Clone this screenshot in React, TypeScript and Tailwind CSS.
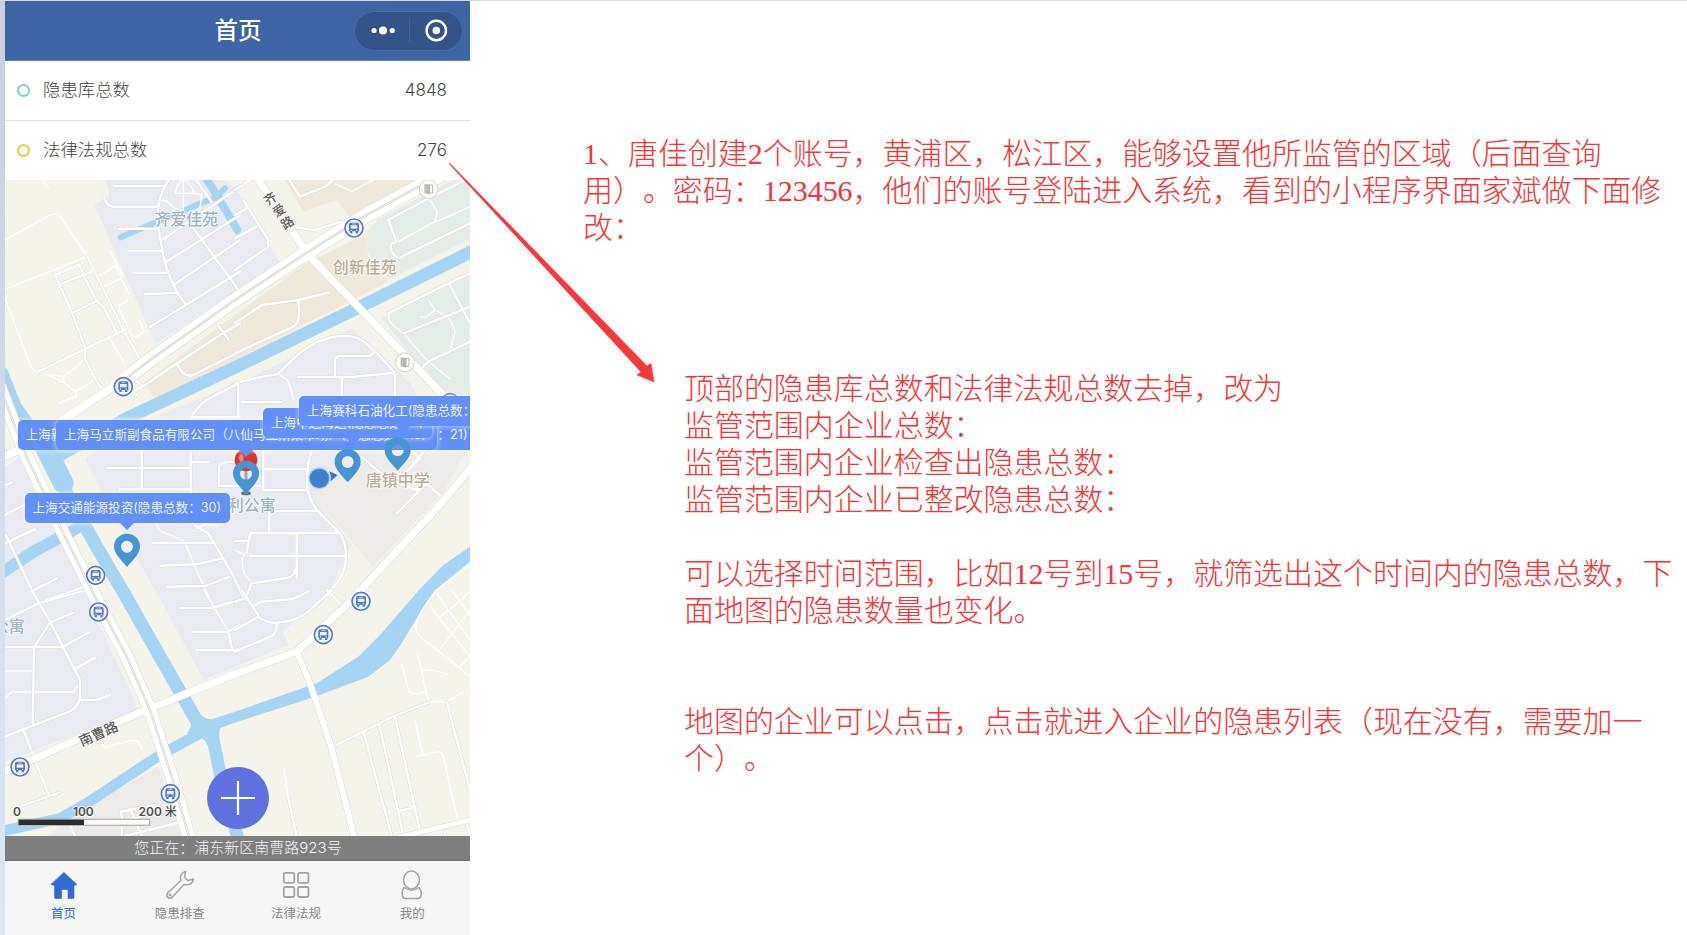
import React from 'react';

type Tile = { x: number; y: number; lanes: string; paths: string };

const zones = [
  { fill: '#e8ebf1', d: 'M315 540L330 585L283 615L467 1032L838 785L705 560L665 540Z' },
  { fill: '#efe9db', d: 'M855 540L910 635L1010 600L1050 655L1325 540Z' },
  { fill: '#efe9db', d: 'M430 1150L705 945L920 790L1095 705L1105 770L1165 845L705 1080L470 1200Z' },
  { fill: '#e4ede8', d: 'M1095 700L1105 760L1170 838L1410 715V540H1360L1140 655Z' },
  { fill: '#e4ede8', d: 'M1145 955L1410 820V1240L1370 1220L1270 1110Z' },
  { fill: '#e8ebf1', d: 'M1055 985L705 1155L400 1275L255 1375L380 1620L465 1770L612 2040L705 2000L865 1935L850 1895L990 1770L1045 1655L1055 1635L940 1490L1015 1400L1300 1340L1240 1160L1150 1070Z' },
  { fill: '#edece8', d: 'M940 1490L1045 1375L1410 1330L1335 1470L1120 1700Z' },
  { fill: '#e8ebf1', d: 'M15 1400L60 1375L265 1800L415 2130L15 2285Z' },
  { fill: '#ecebe7', d: 'M475 2300L220 2440L150 2508H545Z' },
];

const rivers = [
  { w: 38, d: 'M1420 752L1040 940L705 1102L380 1255L170 1370' },
  { w: 40, d: 'M5 1120L45 1220L150 1370L200 1480L290 1640L375 1785L480 1970L600 2180' },
  { w: 62, d: 'M130 1330L190 1450' },
  { w: 36, d: 'M0 1722L100 1655L230 1585' },
  { w: 32, d: 'M610 2195L480 2265L260 2410L180 2455L0 2495' },
  { w: 38, d: 'M632 2180L662 2330L715 2520' },
  { w: 18, d: 'M362 712L520 645L650 590L675 565' },
  { w: 24, d: 'M615 530L650 585L712 690' },
];

const trunk = [
  { w: 42, d: 'M340 1165L450 1080L705 900L925 755L1100 645L1320 525', mid: true },
  { w: 24, d: 'M340 1160L180 1265L60 1350L0 1372', mid: false },
  { w: 22, d: 'M765 525L925 765L1325 1180L1380 1240', mid: false },
  { w: 38, d: 'M-5 1150L80 1370L185 1590L285 1790L380 1970L450 2130L515 2330L570 2520', mid: true },
  { w: 22, d: 'M0 2322L250 2210L450 2125L705 2022L890 1955L1045 1810L1105 1745L1310 1525L1420 1395', mid: false },
  { w: 18, d: 'M890 1955L930 2050L995 2245L1065 2520', mid: false },
  { w: 14, d: 'M1195 2512L1420 2458', mid: false },
];

const tiles: Tile[] = [
  {
    x: 0,
    y: 525,
    paths:
      'M343 33H485M312 65Q318 92 340 95H475M357 161H470M388 227H482M402 293H497M435 358L528 353M510 10Q470 60 473 140Q485 230 500 280Q525 350 555 385M450 456L720 290M520 330L720 195M497 262L720 120M487 195L640 90L720 35M585 10L635 80M580 160L720 350M262 245L370 465L425 560M165 300L238 268L250 300L290 378L310 395L350 472M165 300L215 410L255 515V550Q275 600 312 650M180 328L280 288M220 412L290 378M110 592L255 522L380 462M400 610L430 635M430 632L660 480L720 445M655 452L685 492M530 565Q550 610 580 600L720 530M640 660L720 620',
    lanes:
      'M15 195L150 120L172 116L185 130L262 245M15 343L262 245M15 370L75 530Q90 580 110 592M330 228L370 305M295 305L345 272L388 358M310 335L360 312M383 377L358 390V405L395 480Q405 495 432 468L417 435M330 490L370 560M145 598L190 605L230 575L255 550M145 600L195 625L225 650L285 615M195 625L190 610M130 15L145 40M525 55Q535 15 550 15Q575 25 582 55ZM550 15V105M475 75L500 78Q530 110 550 105M582 55L605 60L600 100',
  },
  {
    x: 705,
    y: 525,
    paths:
      'M0 285L100 215V195L25 75M0 190L65 155M0 120L35 100M160 10L195 65L270 35L300 10M0 45L55 10M180 157L237 165L320 140M460 135L580 70L700 10M460 135L485 200M705 145L490 250Q460 230 470 205L485 200M0 445L80 390L190 375L280 353M188 375Q195 400 190 430Q187 450 170 457L0 535M460 415L640 325L705 295M505 475L705 395M645 330L705 445M560 580L580 560L705 500M0 625L60 610L130 597Q200 520 250 500Q320 470 370 490Q410 510 480 595V675M190 606L350 606L480 593M300 606V555Q300 545 315 543H405L415 535M320 606V675M10 625V700M0 330L20 360',
    lanes:
      'M300 25L350 50L415 15M585 75L607 110L600 140L490 200M605 140L705 95M460 415Q460 440 475 450L510 480L575 555L645 612M583 378L600 405L570 428L557 426M600 405L640 425L660 465Q655 500 645 525M130 597L158 615L175 660',
  },
  {
    x: 0,
    y: 1140,
    paths:
      'M575 115Q580 90 620 60L715 10V115M575 112H720M425 200V328M325 264H572M572 112V420L590 440L625 460L670 535L735 650M575 247H625M360 328H570M657 318V260Q660 245 700 245M657 318H790M590 445L610 436H655M460 488H640M480 557L590 553L670 535M503 620L620 617L690 590M15 405L100 360M15 490L105 447M18 465L100 640M100 632L170 595M15 315L35 308M380 15L410 45M390 40L460 0',
    lanes:
      'M470 425Q470 455 500 460L555 485L580 550L630 660M140 660L255 620M180 70Q190 60 230 50L225 30',
  },
  {
    x: 705,
    y: 1140,
    paths:
      'M20 66H138M85 268H215M85 190V330H215M235 200Q210 260 218 330Q225 360 245 390L315 460Q340 500 330 560Q320 600 285 632L240 680M105 393H245M103 393V455M0 483H40L47 460L315 458M45 527H330M185 460V595M45 460L35 520M50 610L150 595Q180 590 180 570M50 608L30 660M0 600L30 660M380 230L420 265L455 295L545 330L590 280M525 205L555 235L500 290M485 400L575 310L630 360M535 250L600 180',
    lanes: 'M35 520Q15 530 25 570Q30 590 50 607M160 5L175 60M45 527L20 520L0 510',
  },
  {
    x: 0,
    y: 1770,
    paths:
      'M95 0L150 95L240 270V325Q235 345 215 362L15 440M15 90L115 40M150 98L220 68M103 170L150 98M185 172L265 128M15 171H185M222 238L285 203M102 171L98 400M240 330H290L330 315M70 420L145 612M35 658L180 607M540 54H635L720 30M580 125H685L720 105M588 181H705L720 175M685 125L697 180M365 738V680L362 665L465 645M365 695L440 675M390 655L425 738M375 738L545 695M210 705L225 738',
    lanes:
      'M115 40L260 0M15 243H100M15 325L35 306H220L240 280M300 450L315 472L400 450L415 455L425 475M612 0L685 125',
  },
  {
    x: 705,
    y: 1770,
    paths:
      'M0 120L70 80Q100 100 125 98Q180 95 220 65L290 0M0 185L110 138Q125 130 125 100M20 0L70 75M0 35L30 25M55 50L75 35L170 28L220 5M275 0L325 50M290 472L480 377L580 338M387 430L470 738M433 402L505 738M480 380L555 725M635 335L705 600M495 662L540 652M160 625L185 738M630 725V738M695 700L705 738',
    lanes:
      'M580 335H635L690 303M147 540L160 625M548 190L580 335M500 220L520 300Q530 318 570 307M560 240L600 242L637 253M540 393L563 493M543 500L610 485Q620 485 625 500L670 700M605 0Q550 70 543 100V120L555 140L705 258M585 50L705 200M610 85L680 30L705 5M610 185L705 60M605 10L705 150M675 230L705 200M650 0L705 75M600 5L705 -75',
  },
];

const stops = [
  [370, 1160], [1062, 684], [1350, 1208], [287, 1726], [296, 1836],
  [60, 2301], [511, 2381], [1083, 1804], [970, 1904],
];

function BusStop({ x, y }: { x: number; y: number }) {
  return (
    <g transform={`translate(${x} ${y})`}>
      <circle r="31" fill="#fff" opacity=".8" />
      <circle r="27" fill="#eef2fb" stroke="#5478cb" strokeWidth="5" />
      <path d="M-9 -16H9Q15 -16 15 -9V10H-15V-9Q-15 -16 -9 -16ZM-12 10H-5V16H-12ZM5 10H12V16H5Z" fill="#5478cb" />
      <path d="M-10 -8H10V2H-10Z" fill="#eef2fb" />
      <path d="M-6 -12H6" stroke="#eef2fb" strokeWidth="2" />
      <circle cx="-8" cy="7" r="2" fill="#fff" />
      <circle cx="8" cy="7" r="2" fill="#fff" />
    </g>
  );
}

function Gate({ x, y }: { x: number; y: number }) {
  return (
    <g transform={`translate(${x} ${y})`}>
      <circle r="28" fill="#fefefc" stroke="#d2d1cc" strokeWidth="3" />
      <path d="M-13 -14H3V16L-13 12Z" fill="#b9b6ae" />
      <path d="M3 -12H12V12H3Z" fill="none" stroke="#b9b6ae" strokeWidth="3" />
      <path d="M-8 -9V9" stroke="#d9d6cf" strokeWidth="2" />
    </g>
  );
}

function BaseMap() {
  return (
    <svg className="block h-[656px] w-[465px]" viewBox="15 540 1395 1968" fill="none">
      <rect x="15" y="540" width="1395" height="1968" fill="#f4f4ea" />
      {zones.map((z) => (
        <path key={z.d} d={z.d} fill={z.fill} />
      ))}
      <g stroke="#a6d4f5" strokeLinejoin="round" strokeLinecap="round">
        {rivers.map((r) => (
          <path key={r.d} d={r.d} strokeWidth={r.w} />
        ))}
      </g>
      <path
        fill="#a6d4f5"
        d="M1410 1640L1330 1695L1257 1770L1145 1900L1075 1970L950 2050L705 2135L635 2158Q610 2158 590 2130L540 2080L575 2160Q575 2185 560 2200L600 2212Q620 2220 628 2250L660 2300Q652 2200 662 2183L705 2168L945 2090L1105 2030L1170 1980L1205 1930L1225 1895L1305 1770L1410 1685Z"
      />
      {tiles.map((t) => (
        <g key={`${t.x}-${t.y}`} transform={`translate(${t.x} ${t.y})`} strokeLinejoin="round" strokeLinecap="round">
          <path d={t.lanes} stroke="#fff" strokeWidth="4" />
          <path d={t.paths} stroke="#d6d6d5" strokeWidth="10" />
          <path d={t.paths} stroke="#fff" strokeWidth="7.500" />
        </g>
      ))}
      <g strokeLinejoin="round">
        {trunk.map((t) => (
          <path key={t.d} d={t.d} stroke="#d8d8d3" strokeWidth={t.w + 3} />
        ))}
        {trunk.map((t) => (
          <path key={t.d} d={t.d} stroke="#fff" strokeWidth={t.w} />
        ))}
        {trunk.filter((t) => t.mid).map((t) => (
          <g key={t.d}>
            <path d={t.d} stroke="#d4d4d0" strokeWidth="7" />
            <path d={t.d} stroke="#f4f4ee" strokeWidth="3" />
          </g>
        ))}
      </g>
      {stops.map(([x, y]) => (
        <BusStop key={`${x}-${y}`} x={x} y={y} />
      ))}
      <Gate x={1286} y={567} />
      <Gate x={1215} y={1087} />
      <g
        fontFamily="'Noto Sans CJK SC', sans-serif"
        stroke="#fff"
        strokeOpacity=".85"
        strokeWidth="5"
        paintOrder="stroke"
        strokeLinejoin="round"
        fontSize="48"
        fontWeight="500"
      >
        <text x="463" y="676" fill="#9cb3c2">齐爱佳苑</text>
        <text x="998" y="820" fill="#b9ac93">创新佳苑</text>
        <text x="1097" y="1457" fill="#b9ac93">唐镇中学</text>
        <text x="683" y="1532" fill="#9cb3c2">利公寓</text>
        <text x="-22" y="1895" fill="#9cb3c2">公寓</text>
        <g fill="#5a5a5a" fontSize="38" textAnchor="middle">
          <text transform="translate(811 596) rotate(-33)" y="14">齐</text>
          <text transform="translate(837 631) rotate(-33)" y="14">爱</text>
          <text transform="translate(862 668) rotate(-33)" y="14">路</text>
          <text transform="translate(296 2202) rotate(-24)" y="14" fontSize="41">南曹路</text>
        </g>
        <g fill="#4c4c4c" fontSize="36" fontFamily="Inter, 'Noto Sans CJK SC', sans-serif" textAnchor="middle">
          <text x="51" y="2447" fontWeight="600">0</text>
          <text x="250" y="2447" fontWeight="600">100</text>
          <text x="473" y="2447" fontWeight="600">200 <tspan fontWeight="500">米</tspan></text>
        </g>
      </g>
      <rect x="55" y="2458" width="394" height="18" fill="#fbfbf9" stroke="#b5b5b3" strokeWidth="4" />
      <rect x="56" y="2459" width="196" height="16" fill="#2b2d2e" />
      <g transform="translate(738 1380)">
        <ellipse cx="0" cy="100" rx="15" ry="6" fill="#6b6f73" />
        <path d="M0 20V100" stroke="#a2a5a8" strokeWidth="9" />
        <circle cx="0" cy="0" r="34" fill="#dd3428" />
        <ellipse cx="-14" cy="-6" rx="7" ry="11" fill="#f0857c" />
      </g>
      <circle cx="958" cy="1435" r="33" fill="#a9c8ef" opacity=".8" />
      <circle cx="958" cy="1435" r="29" fill="#3f7fd1" />
      <path d="M988 1414L1013 1425L992 1444Q995 1428 988 1414Z" fill="#3f72be" />
    </svg>
  );
}

function Pin({ x, y }: { x: number; y: number }) {
  return (
    <path
      transform={`translate(${x} ${y})`}
      fill="#4594d3"
      fillRule="evenodd"
      d="M0 0C-22 0 -39 17 -39 38C-39 62 -18 78 0 100C18 78 39 62 39 38C39 17 22 0 0 0ZM0 21A18 18 0 1 1 0 57A18 18 0 1 1 0 21Z"
    />
  );
}

function Callout({ place, tail, children }: { place: string; tail: string; children: React.ReactNode }) {
  return (
    <div
      className={`absolute flex h-[30px] items-center rounded-[5px] bg-[#628ff8] px-2 pt-px text-[12.6px] whitespace-nowrap text-[#eaf0ff] shadow-[0_0_4px_1px_rgba(255,255,255,0.5)] ${place}`}
    >
      <svg className={`absolute top-[29px] h-[8px] w-4 ${tail}`} viewBox="0 0 16 8">
        <path d="M0 0H16L8 8Z" fill="#628ff8" />
      </svg>
      {children}
    </div>
  );
}

function StatRow({ ring, label, value }: { ring: string; label: string; value: string }) {
  return (
    <div className="flex flex-1 items-center pr-[23px] pl-3">
      <span className={`size-[13px] rounded-full border-[2.5px] ${ring}`} />
      <span className="ml-[13px] text-[17.4px]">{label}</span>
      <span className="ml-auto text-[17px] text-[#444]">{value}</span>
    </div>
  );
}

function Tab({ label, tone, children }: { label: string; tone: string; children: React.ReactNode }) {
  return (
    <div className={`flex flex-1 flex-col items-center pt-[9px] pl-px ${tone}`}>
      <svg className="h-[30px] w-[30px]" viewBox="0 0 30 30" fill="none" stroke="#a3a3a3" strokeWidth="1.5" strokeLinejoin="round" strokeLinecap="round">
        {children}
      </svg>
      <span className="mt-[5px] text-[12.5px] leading-[18px]">{label}</span>
    </div>
  );
}

function Phone() {
  return (
    <div className="flex w-[465px] shrink-0 flex-col overflow-hidden bg-white font-['Inter','Noto_Sans_CJK_SC',sans-serif]">
      <header className="relative flex h-[60px] items-center justify-center border-b border-[#5d7fb5] bg-[#3d65a5] pt-px pl-px">
        <h1 className="text-[23.5px] font-medium text-white">首页</h1>
        <div className="absolute top-[10px] right-[7px] flex h-10 w-[109px] items-center rounded-full border border-[#4c6da1] bg-[#325489]">
          <svg className="h-10 w-[107px]" viewBox="0 0 107 40" fill="#fff">
            <circle cx="19" cy="19.500" r="2.600" />
            <circle cx="28" cy="19.500" r="4" />
            <circle cx="37.200" cy="19.500" r="2.600" />
            <path d="M54.500 8V31" stroke="#44669b" />
            <circle cx="81.300" cy="19.500" r="9.700" fill="none" stroke="#fff" strokeWidth="2.400" />
            <circle cx="81.300" cy="19.500" r="3.800" />
          </svg>
        </div>
      </header>
      <section className="flex h-[119px] flex-col divide-y divide-[#e3e3e3] font-light text-[#444]">
        <StatRow ring="border-[#7bd3c3]" label="隐患库总数" value="4848" />
        <StatRow ring="border-[#f5c446]" label="法律法规总数" value="276" />
      </section>
      <section className="relative h-[656px] overflow-hidden">
        <BaseMap />
        <Callout place="left-[12.500px] top-[240px] w-[458px]" tail="hidden">
          <span>上海新</span>
          <span className="ml-auto">：21)</span>
        </Callout>
        <Callout place="left-[51px] top-[240px] w-[381px]" tail="left-[182px]">
          上海马立斯副食品有限公司（八仙马立斯菜市场）(隐患总数：18)
        </Callout>
        <Callout place="left-[258px] top-[228px] w-[169px]" tail="left-[82px]">
          上海中远海运(隐患总数：1)
        </Callout>
        <Callout place="left-[294px] top-[216px] w-[208px]" tail="left-[96px]">
          上海赛科石油化工(隐患总数：
        </Callout>
        <Callout place="left-[19.500px] top-[313px] w-[205px]" tail="left-[94px]">
          上海交通能源投资(隐患总数：30)
        </Callout>
        <svg className="absolute inset-0 h-[656px] w-[465px]" viewBox="15 540 1395 1968">
          <Pin x={381} y={1601} />
          <Pin x={1043} y={1347} />
          <Pin x={1193} y={1312} />
          <Pin x={738} y={1382} />
        </svg>
        <button className="absolute top-[587px] left-[202px] flex size-[62px] items-center justify-center rounded-full bg-[#5d72de]">
          <svg className="size-9" viewBox="0 0 36 36" stroke="#fff" strokeWidth="2.200">
            <path d="M18 1V35M1 18H35" />
          </svg>
        </button>
      </section>
      <p className="flex h-[25px] items-center justify-center border-b border-[#6b6b6b] bg-[#7f7f7f] pl-px text-[15px] font-light text-[#f2f2f2]">
        您正在：浦东新区南曹路923号
      </p>
      <nav className="flex h-[74px] bg-[#f6f6f6]">
        <Tab label="首页" tone="text-[#2e6bd2]">
          <path d="M15 2.500L28 14.500L25 15.500V27.500Q25 28.500 24 28.500H19V20.500Q19 19.500 18 19.500H13.500Q12.500 19.500 12.500 20.500V28.500H6.500Q5.500 28.500 5.500 27.500V15.500L2 14.500Z" fill="#2e6bd2" stroke="#2e6bd2" strokeWidth=".6" />
        </Tab>
        <Tab label="隐患排查" tone="text-[#888]">
          <path d="M20.500 1.500C15.500 3 14.500 7 16 10.500L2.500 23C0.500 26 3.500 29.500 7 27.500L19 14.500C23.500 15.500 28 13.500 28.500 9L23 10.500L19.500 7.500Z" />
          <circle cx="5" cy="25" r=".7" />
        </Tab>
        <Tab label="法律法规" tone="text-[#888]">
          <g strokeWidth="1.800">
            <rect x="2.800" y="2.800" width="10.500" height="10" rx="1.500" />
            <rect x="17" y="2.800" width="10.500" height="10" rx="1.500" />
            <rect x="2.800" y="17" width="10.500" height="10" rx="1.500" />
            <rect x="17" y="17" width="10.500" height="10" rx="1.500" />
          </g>
        </Tab>
        <Tab label="我的" tone="text-[#888]">
          <ellipse cx="14.500" cy="10" rx="8" ry="9" />
          <path d="M7 17.500Q4.500 21 5.500 26Q6 28.500 9 28.500H20.500Q23.500 28.500 24 26Q25 21 22 17.500Q14.500 23 7 17.500Z" />
        </Tab>
      </nav>
    </div>
  );
}

const intro = [
  '1、唐佳创建2个账号，黄浦区，松江区，能够设置他所监管的区域（后面查询',
  '用）。密码：123456，他们的账号登陆进入系统，看到的小程序界面家斌做下面修',
  '改：',
];

const details = [
  ['顶部的隐患库总数和法律法规总数去掉，改为', '监管范围内企业总数：', '监管范围内企业检查出隐患总数：', '监管范围内企业已整改隐患总数：'],
  ['可以选择时间范围，比如12号到15号，就筛选出这个时间内的隐患总数，下', '面地图的隐患数量也变化。'],
  ['地图的企业可以点击，点击就进入企业的隐患列表（现在没有，需要加一', '个）。'],
];

export default function App() {
  return (
    <div className="relative flex h-[935px] w-[1687px] overflow-hidden border-t border-[#d9dbdc] bg-white [text-spacing-trim:space-all]">
      <div className="w-[5px] shrink-0 bg-linear-to-b from-[#c7cfe1] to-[#dce7f4]" />
      <Phone />
      <main className="flex flex-col pt-[134px] pl-[113px] font-['Liberation_Serif','Noto_Sans_CJK_SC',serif] text-[29.96px] leading-[37px] font-light whitespace-nowrap text-[#fb3535]">
        <div>
          {intro.map((line) => (
            <p key={line}>{line}</p>
          ))}
        </div>
        <div className="mt-[124px] ml-[101px] flex flex-col">
          <div>{details[0].map((line) => <p key={line}>{line}</p>)}</div>
          <div className="mt-[37px]">{details[1].map((line) => <p key={line}>{line}</p>)}</div>
          <div className="mt-[74px]">{details[2].map((line) => <p key={line}>{line}</p>)}</div>
        </div>
      </main>
      <svg className="pointer-events-none absolute top-[159px] left-[445px] h-[230px] w-[215px]" viewBox="445 160 215 230">
        <path d="M449 163.500L450 163.500L647 366L651 363.500L654 382L637 375L641 372Z" fill="#fb3838" stroke="#fb3838" strokeWidth=".6" />
      </svg>
    </div>
  );
}
